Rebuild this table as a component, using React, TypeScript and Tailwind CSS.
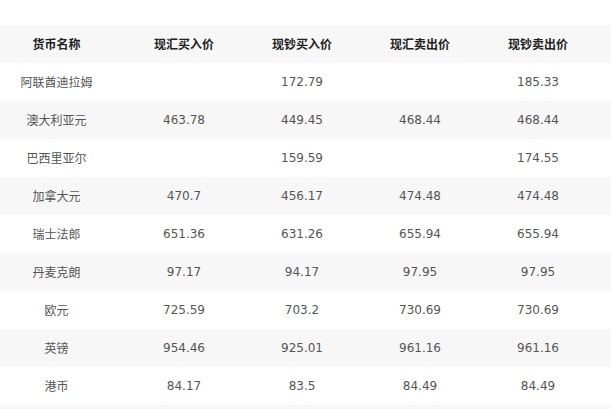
import React from "react";

const rows: [string, string, string, string, string][] = [
  ["阿联酋迪拉姆", "", "172.79", "", "185.33"],
  ["澳大利亚元", "463.78", "449.45", "468.44", "468.44"],
  ["巴西里亚尔", "", "159.59", "", "174.55"],
  ["加拿大元", "470.7", "456.17", "474.48", "474.48"],
  ["瑞士法郎", "651.36", "631.26", "655.94", "655.94"],
  ["丹麦克朗", "97.17", "94.17", "97.95", "97.95"],
  ["欧元", "725.59", "703.2", "730.69", "730.69"],
  ["英镑", "954.46", "925.01", "961.16", "961.16"],
  ["港币", "84.17", "83.5", "84.49", "84.49"],
];

const headers = ["货币名称", "现汇买入价", "现钞买入价", "现汇卖出价", "现钞卖出价"];

const font = {
  fontFamily: '"DejaVu Sans", Verdana, "Noto Sans CJK SC", sans-serif',
};

export default function App() {
  return (
    <div className="w-[611px] h-[409px] overflow-hidden bg-white pt-[25px]" style={font}>
      <div className="grid grid-cols-[125px_118px_118px_118px_118px_1fr] h-[38px] items-center bg-[#f7f7f7] text-[12px] font-bold text-[#222]">
        {headers.map((h, i) => (
          <div key={i} className={`text-center ${i === 0 ? "pr-[12px]" : ""}`} style={{ fontFamily: '"Noto Sans CJK SC", sans-serif' }}>
            {h}
          </div>
        ))}
        <div />
      </div>
      {rows.map((r, ri) => (
        <div
          key={ri}
          className={`grid grid-cols-[125px_118px_118px_118px_118px_1fr] h-[38px] items-center text-[12px] text-[#555] ${ri % 2 === 1 ? "bg-[#f7f7f7]" : "bg-white"}`}
        >
          {r.map((c, ci) => (
            <div
              key={ci}
              className={`text-center ${ci === 0 ? "pr-[12px]" : ""}`}
              style={ci === 0 ? { fontFamily: '"Noto Sans CJK SC", sans-serif' } : undefined}
            >
              {c}
            </div>
          ))}
          <div />
        </div>
      ))}
      <div className="h-[38px] bg-[#f7f7f7]" />
    </div>
  );
}
